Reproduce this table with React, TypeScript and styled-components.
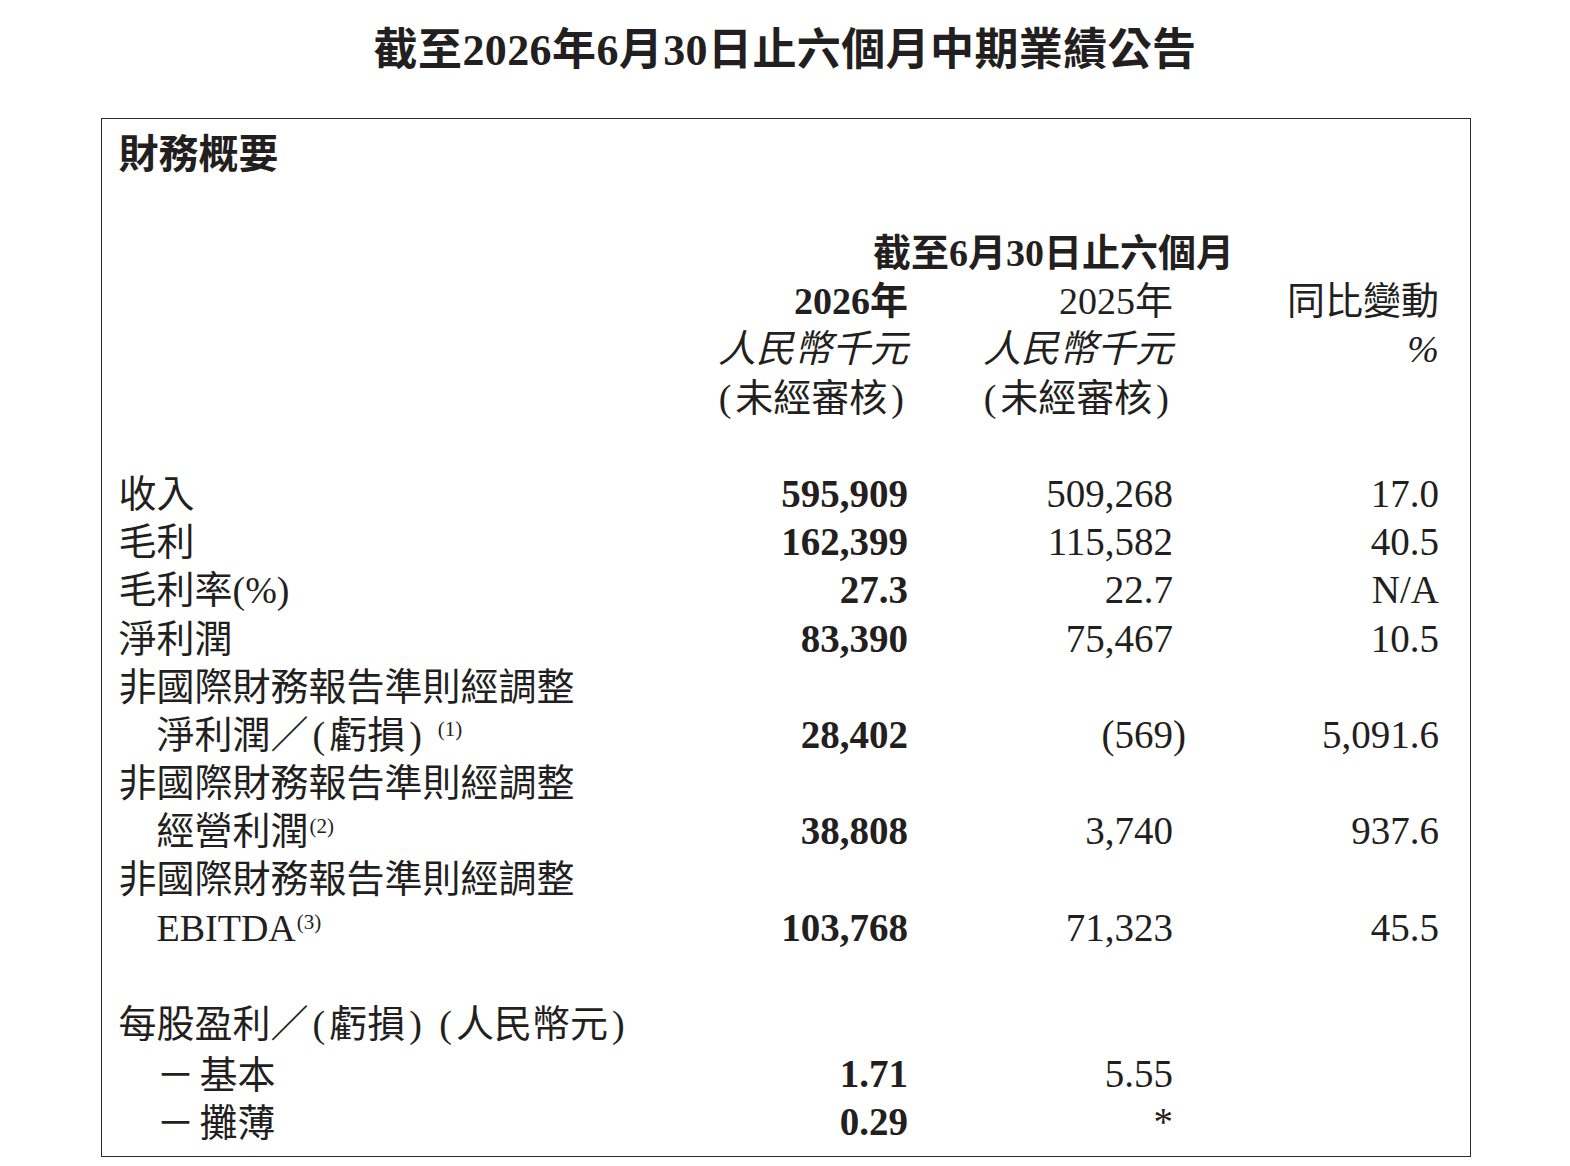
import React from "react";
import styled, { createGlobalStyle } from "styled-components";

const GlobalStyle = createGlobalStyle`
  html, body { margin: 0; padding: 0; background: #ffffff; }
  body {
    font-family: "Liberation Serif", "Noto Sans CJK TC", serif;
    color: #231f20;
  }
`;

const Page = styled.div`
  width: 1570px;
  min-height: 1166px;
  padding-top: 23px;
  box-sizing: border-box;
  background: #ffffff;
`;

const Title = styled.h1`
  margin: 0 0 39px;
  text-align: center;
  font-family: "Liberation Serif", "Noto Sans CJK TC", serif;
  font-size: 44px;
  line-height: 56px;
  font-weight: 700;
  letter-spacing: 0.4px;
`;

const Box = styled.section`
  margin: 0 99px 0 101px;
  border: 1.5px solid #2a2a2a;
  padding: 8px 31px 11.5px 16.5px;
`;

const Heading = styled.h2`
  margin: 0 0 54px;
  font-family: "Noto Sans CJK TC", sans-serif;
  font-size: 40px;
  line-height: 48px;
  font-weight: 700;
`;

const Row = styled.div`
  display: grid;
  grid-template-columns: 1fr 265px 265px 266px;
  align-items: center;
  height: 48.2px;
  font-size: 38px;
  line-height: 48.2px;
  white-space: nowrap;
`;

const Spacer = styled.div`
  height: 48.2px;
`;

const Label = styled.div<{ $indent?: boolean }>`
  padding-left: ${(p) => (p.$indent ? "38px" : "0")};
`;

const SpanHead = styled.div`
  grid-column: 2 / 5;
  padding-left: 230px;
  font-weight: 700;
`;

const Cell = styled.div<{ $bold?: boolean; $italic?: boolean }>`
  text-align: right;
  font-weight: ${(p) => (p.$bold ? 700 : 400)};
  font-style: ${(p) => (p.$italic ? "italic" : "normal")};
`;

const Num = styled.div<{ $bold?: boolean }>`
  text-align: right;
  font-size: 39px;
  font-weight: ${(p) => (p.$bold ? 700 : 400)};
`;

const Hang = styled.span`
  margin-right: -0.333em;
`;

const Paren = styled.span`
  margin: 0 4px;
`;

const Sup = styled.span<{ $gap?: boolean }>`
  font-size: 21px;
  line-height: 1;
  vertical-align: 0.55em;
  margin-left: ${(p) => (p.$gap ? "12px" : "1px")};
`;

const Dash = styled.span`
  font-family: "Noto Sans CJK TC", sans-serif;
  margin-right: 5px;
`;

type DataRow = {
  label: React.ReactNode;
  indent?: boolean;
  a?: string;
  b?: React.ReactNode;
  c?: string;
};

const NON_IFRS = "非國際財務報告準則經調整";

const rows: (DataRow | "gap")[] = [
  { label: "收入", a: "595,909", b: "509,268", c: "17.0" },
  { label: "毛利", a: "162,399", b: "115,582", c: "40.5" },
  { label: "毛利率(%)", a: "27.3", b: "22.7", c: "N/A" },
  { label: "淨利潤", a: "83,390", b: "75,467", c: "10.5" },
  { label: NON_IFRS },
  {
    label: (
      <>
        淨利潤／<Paren>(</Paren>虧損<Paren>)</Paren>
        <Sup $gap>(1)</Sup>
      </>
    ),
    indent: true,
    a: "28,402",
    b: (
      <>
        (569<Hang>)</Hang>
      </>
    ),
    c: "5,091.6",
  },
  { label: NON_IFRS },
  {
    label: (
      <>
        經營利潤<Sup>(2)</Sup>
      </>
    ),
    indent: true,
    a: "38,808",
    b: "3,740",
    c: "937.6",
  },
  { label: NON_IFRS },
  {
    label: (
      <>
        EBITDA<Sup>(3)</Sup>
      </>
    ),
    indent: true,
    a: "103,768",
    b: "71,323",
    c: "45.5",
  },
  "gap",
  {
    label: (
      <>
        每股盈利／<Paren>(</Paren>虧損<Paren>)</Paren> <Paren>(</Paren>人民幣元<Paren>)</Paren>
      </>
    ),
  },
  {
    label: (
      <>
        <Dash>－</Dash>基本
      </>
    ),
    indent: true,
    a: "1.71",
    b: "5.55",
  },
  {
    label: (
      <>
        <Dash>－</Dash>攤薄
      </>
    ),
    indent: true,
    a: "0.29",
    b: "*",
  },
];

export default function App() {
  return (
    <Page>
      <GlobalStyle />
      <Title>截至2026年6月30日止六個月中期業績公告</Title>
      <Box>
        <Heading>財務概要</Heading>
        <Row>
          <Label />
          <SpanHead>截至6月30日止六個月</SpanHead>
        </Row>
        <Row>
          <Label />
          <Cell $bold>2026年</Cell>
          <Cell>2025年</Cell>
          <Cell>同比變動</Cell>
        </Row>
        <Row>
          <Label />
          <Cell $italic>人民幣千元</Cell>
          <Cell $italic>人民幣千元</Cell>
          <Cell $italic>%</Cell>
        </Row>
        <Row>
          <Label />
          <Cell>
            <Paren>(</Paren>未經審核<Paren>)</Paren>
          </Cell>
          <Cell>
            <Paren>(</Paren>未經審核<Paren>)</Paren>
          </Cell>
          <Cell />
        </Row>
        <Spacer />
        {rows.map((r, i) =>
          r === "gap" ? (
            <Spacer key={i} />
          ) : (
            <Row key={i}>
              <Label $indent={r.indent}>{r.label}</Label>
              <Num $bold>{r.a ?? ""}</Num>
              <Num>{r.b ?? ""}</Num>
              <Num>{r.c ?? ""}</Num>
            </Row>
          )
        )}
      </Box>
    </Page>
  );
}
